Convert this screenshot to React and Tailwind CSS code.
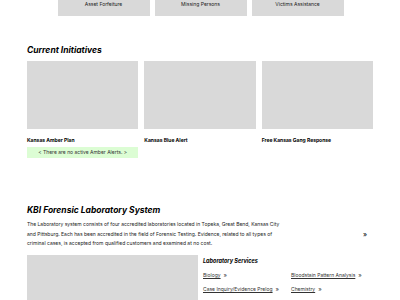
import React from "react";

const topLinks = ["Asset Forfeiture", "Missing Persons", "Victims Assistance"];

const initiatives = [
  { title: "Kansas Amber Plan", alert: true },
  { title: "Kansas Blue Alert" },
  { title: "Free Kansas Gang Response" },
];

const services = [
  "Biology",
  "Bloodstain Pattern Analysis",
  "Case Inquiry/Evidence Prelog",
  "Chemistry",
];

export default function App() {
  return (
    <div
      className="w-[400px] h-[300px] overflow-hidden bg-white text-black"
      style={{ fontFamily: "Inter, 'Liberation Sans', sans-serif" }}
    >
      {/* Top quick links */}
      <div className="flex justify-center gap-[5px] pl-[1px]">
        {topLinks.map((t) => (
          <div
            key={t}
            className="w-[92px] h-[16px] bg-[#d9d9d9] flex items-start justify-center pt-[1px] text-[5px] leading-[7px] text-[#222]"
          >
            {t}
          </div>
        ))}
      </div>

      {/* Current Initiatives */}
      <div className="px-[27px] pt-[29px]">
        <h2 className="text-[8.5px] leading-[10px] font-bold italic">
          Current Initiatives
        </h2>
        <div className="grid grid-cols-3 gap-[6px] mt-[6px]">
          {initiatives.map((i) => (
            <div key={i.title}>
              <div className="h-[68px] bg-[#d9d9d9]" />
              <p className="mt-[8px] text-[5px] leading-[6px] font-bold">
                {i.title}
              </p>
              {i.alert && (
                <div className="mt-[4px] h-[11px] bg-[#dcfdd4] flex items-center justify-center text-[5px] text-[#333]">
                  &lt; There are no active Amber Alerts. &gt;
                </div>
              )}
            </div>
          ))}
        </div>
      </div>

      {/* KBI Forensic Laboratory System */}
      <div className="px-[27px] pt-[47px]">
        <h2 className="text-[8.5px] leading-[10px] font-bold italic">
          KBI Forensic Laboratory System
        </h2>
        <div className="flex items-center mt-[5px]">
          <p className="w-[256px] text-[5px] leading-[9.7px] text-[#222]">
            The Laboratory system consists of four accredited laboratories
            located in Topeka, Great Bend, Kansas City and Pittsburg. Each has
            been accredited in the field of Forensic Testing. Evidence, related
            to all types of criminal cases, is accepted from qualified
            customers and examined at no cost.
          </p>
          <span className="ml-auto mr-[6px] text-[7px] leading-none">»</span>
        </div>
        <div className="flex gap-[5px] mt-[6px]">
          <div className="w-[171px] h-[60px] bg-[#d9d9d9]" />
          <div className="pt-[3px]">
            <h3 className="text-[5.5px] leading-[7px] font-bold italic">
              Laboratory Services
            </h3>
            <div className="grid grid-cols-[88px_auto] gap-y-[8px] mt-[7px]">
              {services.map((s) => (
                <div key={s} className="text-[5px] leading-[6px] text-[#333]">
                  <span className="underline">{s}</span>
                  <span className="ml-[3px] text-[6px]">»</span>
                </div>
              ))}
            </div>
          </div>
        </div>
      </div>
    </div>
  );
}
